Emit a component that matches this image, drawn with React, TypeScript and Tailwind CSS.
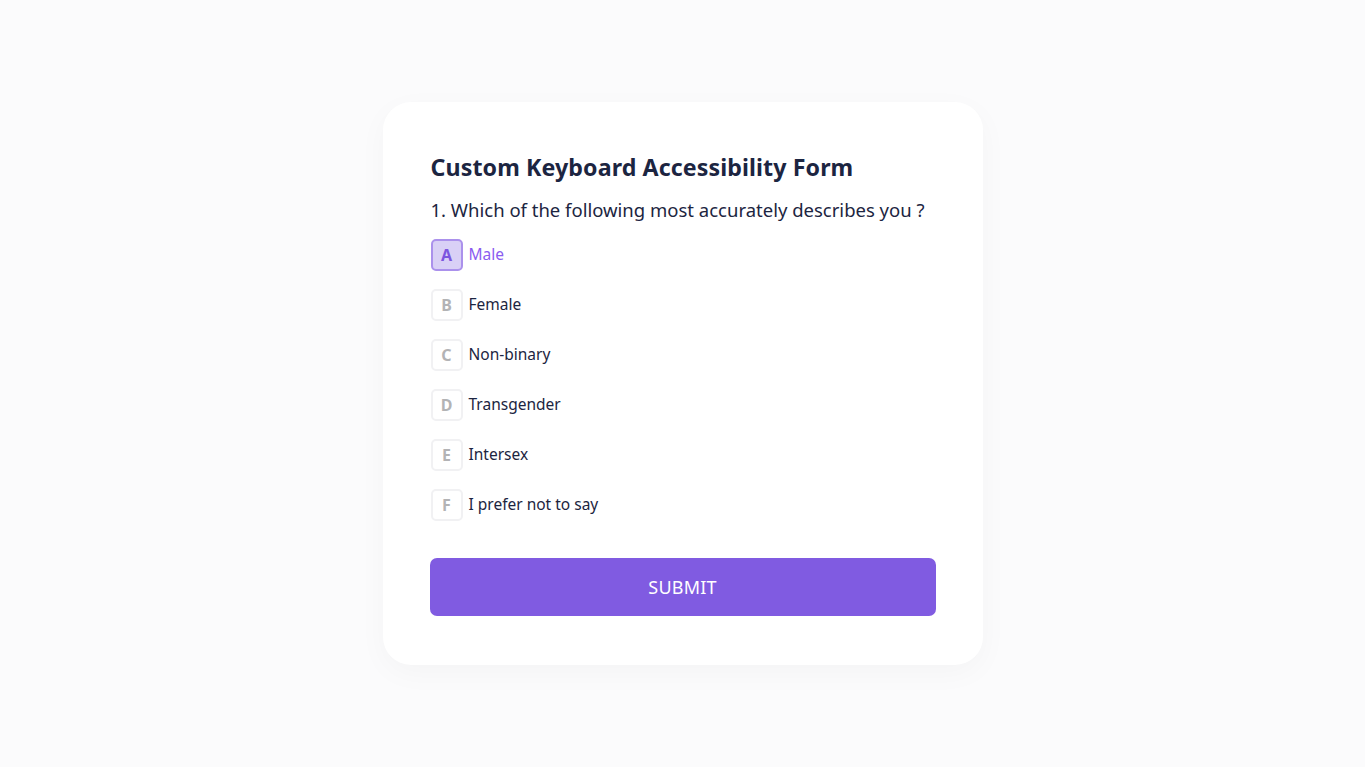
import React from "react";

const options = [
  { key: "A", label: "Male", selected: true },
  { key: "B", label: "Female" },
  { key: "C", label: "Non-binary" },
  { key: "D", label: "Transgender" },
  { key: "E", label: "Intersex" },
  { key: "F", label: "I prefer not to say" },
];

export default function App() {
  return (
    <div
      className="min-h-[767px] w-full bg-[#fbfbfc] flex justify-center pt-[102px]"
      style={{ fontFamily: '"Noto Sans", "Open Sans", sans-serif' }}
    >
      <div className="w-[600px] h-[563px] bg-white rounded-[28px] shadow-[0_8px_30px_rgba(0,0,0,0.03)] px-12 pt-[50px]">
        <h1 className="text-[23.2px] leading-[30px] font-bold text-[#1c2541] tracking-[0.1px]">
          Custom Keyboard Accessibility Form
        </h1>
        <p className="mt-[16px] text-[18.5px] leading-[24px] text-[#1c2541]">
          1. Which of the following most accurately describes you ?
        </p>
        <div className="mt-[17px] flex flex-col gap-[18px]">
          {options.map((o) => (
            <div key={o.key} className="flex items-center gap-[6px]">
              <div
                className={
                  o.selected
                    ? "w-8 h-8 rounded-[5px] border-2 border-[#ab91ec] bg-[#d9d0f6] flex items-center justify-center text-[16px] font-bold text-[#7d56df]"
                    : "w-8 h-8 rounded-[5px] border-2 border-[#f1f1f3] bg-white flex items-center justify-center text-[16px] font-bold text-[#b3b3b5]"
                }
              >
                {o.key}
              </div>
              <span
                className={
                  o.selected
                    ? "text-[15.5px] text-[#8b5cf0]"
                    : "text-[15.5px] text-[#1c2541]"
                }
              >
                {o.label}
              </span>
            </div>
          ))}
        </div>
        <button className="mt-[37px] -ml-px w-[506px] h-[58px] rounded-[7px] bg-[#805be1] text-white text-[18px] tracking-[0.2px] flex items-center justify-center">
          SUBMIT
        </button>
      </div>
    </div>
  );
}
